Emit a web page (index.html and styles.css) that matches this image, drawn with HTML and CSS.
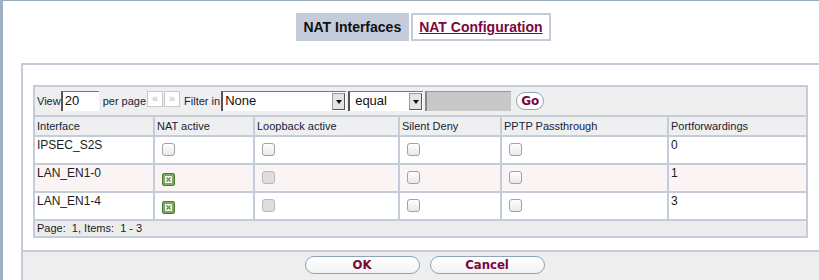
FILE: index.html
```html
<!DOCTYPE html>
<html lang="en">
<head>
    <meta charset="UTF-8">
    <title>NAT Interfaces</title>
    <link rel="stylesheet" href="styles.css">
</head>
<body>

    <div class="page">
        <!-- Tabs -->
        <div class="tabs">
            <span class="tab tab-active">NAT Interfaces</span>
            <a class="tab tab-link" href="#">NAT Configuration</a>
        </div>

        <div class="panel">
            <div class="panel-body">
                <table class="list">
                    <tr class="toolbar">
                        <td colspan="6">
                            <div class="tools">
                                <span class="lbl">View</span>
                                <span class="field field-view">20</span>
                                <span class="lbl lbl-gap">per page</span>
                                <span class="pager">&laquo;</span>
                                <span class="pager">&raquo;</span>
                                <span class="lbl lbl-gap">Filter in</span>
                                <span class="field field-select sel-none">None<span class="arrow"></span></span>
                                <span class="field field-select sel-equal">equal<span class="arrow"></span></span>
                                <span class="field field-off"></span>
                                <button class="go">Go</button>
                            </div>
                        </td>
                    </tr>
                    <tr class="head">
                        <td class="c1">Interface</td>
                        <td class="c2">NAT active</td>
                        <td class="c3">Loopback active</td>
                        <td class="c4">Silent Deny</td>
                        <td class="c5">PPTP Passthrough</td>
                        <td class="c6">Portforwardings</td>
                    </tr>
                    <tr class="row">
                        <td>IPSEC_S2S</td>
                        <td><span class="cb"></span></td>
                        <td><span class="cb"></span></td>
                        <td><span class="cb"></span></td>
                        <td><span class="cb"></span></td>
                        <td>0</td>
                    </tr>
                    <tr class="row row-alt">
                        <td>LAN_EN1-0</td>
                        <td><span class="cb cb-on"><svg width="7" height="7" viewBox="0 0 7 7"><rect x="0" y="0" width="7" height="7" fill="#f4f4f4"/><path d="M1.5 1.5 L5.5 5.5 M5.5 1.5 L1.5 5.5" stroke="#6a8a5a" stroke-width="1.3"/></svg></span></td>
                        <td><span class="cb cb-off"></span></td>
                        <td><span class="cb"></span></td>
                        <td><span class="cb"></span></td>
                        <td>1</td>
                    </tr>
                    <tr class="row">
                        <td>LAN_EN1-4</td>
                        <td><span class="cb cb-on"><svg width="7" height="7" viewBox="0 0 7 7"><rect x="0" y="0" width="7" height="7" fill="#f4f4f4"/><path d="M1.5 1.5 L5.5 5.5 M5.5 1.5 L1.5 5.5" stroke="#6a8a5a" stroke-width="1.3"/></svg></span></td>
                        <td><span class="cb cb-off"></span></td>
                        <td><span class="cb"></span></td>
                        <td><span class="cb"></span></td>
                        <td>3</td>
                    </tr>
                    <tr class="foot">
                        <td colspan="6">Page:&nbsp; 1, Items:&nbsp; 1 - 3</td>
                    </tr>
                </table>
            </div>

            <div class="actions">
                <button class="btn">OK</button>
                <button class="btn">Cancel</button>
            </div>
        </div>
    </div>

</body>
</html>
```

FILE: styles.css
```css
html, body {
    margin: 0;
    padding: 0;
    background: #ffffff;
    overflow: hidden;
}

body {
    font-family: "Liberation Sans", Arial, sans-serif;
    color: #1c1c1c;
}

/* bluish frame on the left and top */
.page {
    min-height: 280px;
    border-left: 3px solid #9fb0c4;
    border-top: 1px solid #9aaabb;
    box-sizing: border-box;
    width: 826px;
}

/* Tabs */
.tabs {
    display: flex;
    justify-content: center;
    gap: 2px;
    margin-top: 12px;
    padding-left: 18px;
}

.tab {
    height: 28px;
    box-sizing: border-box;
    font-size: 14px;
    font-weight: bold;
    line-height: 28px;
    padding: 0 8px 0 7px;
}

.tab-active {
    background: #c3ccd8;
    color: #111111;
}

.tab-link {
    border: 2px solid #c3ccd8;
    line-height: 24px;
    padding: 0 6px 0 6px;
    color: #7a0740;
    text-decoration: underline;
}

/* Panel */
.panel {
    margin: 22px 0 0 18px;
    border: 2px solid #c3ccd8;
    border-right: none;
    border-bottom: none;
}

.panel-body {
    padding: 20px 0 12px 10px;
}

.list {
    width: 775px;
    border-collapse: separate;
    border-spacing: 2px;
    background: #c3ccd8;
    font-size: 11px;
}

.list td {
    padding: 0 2px;
    vertical-align: top;
}

.toolbar td {
    background: #efefef;
    height: 28px;
    padding: 0 2px;
    vertical-align: middle;
}

.tools {
    display: flex;
    align-items: center;
    color: #15243c;
}

.lbl-gap {
    margin-left: 4px;
}

.field {
    display: inline-block;
    box-sizing: border-box;
    height: 20px;
    line-height: 18px;
    font-size: 13px;
    background: #ffffff;
    border-left: 2px solid #555555;
    border-top: 1px solid #777777;
    padding-left: 2px;
    color: #111111;
}

.field-view {
    width: 38px;
}

.field-select {
    position: relative;
    padding-right: 14px;
}

.sel-none {
    width: 125px;
    margin-left: 1px;
}

.sel-equal {
    width: 75px;
    margin-left: 2px;
    padding-left: 5px;
}

.arrow {
    position: absolute;
    right: 1px;
    top: 1px;
    width: 11px;
    height: 15px;
    background: #e4e4e4;
    border: 1px solid #9a9a9a;
    border-right-color: #555555;
    border-bottom-color: #555555;
}

.arrow::after {
    content: "";
    position: absolute;
    left: 3px;
    top: 6px;
    border-left: 3px solid transparent;
    border-right: 3px solid transparent;
    border-top: 4px solid #111111;
}

.field-off {
    width: 86px;
    margin-left: 2px;
    background: #c8c8c8;
    border-left: 2px solid #888888;
    border-top: 1px solid #999999;
}

.pager {
    display: inline-block;
    width: 16px;
    height: 16px;
    box-sizing: border-box;
    border: 1px solid #c8c8c8;
    background: #ffffff;
    color: #b8b8b8;
    font-size: 11px;
    line-height: 13px;
    text-align: center;
    margin-left: 1px;
    margin-top: -4px;
}

.go {
    margin-left: 5px;
    height: 18px;
    padding: 0 4px;
    border: 1px solid #8fa3b8;
    border-radius: 9px;
    background: #ffffff;
    color: #7a0740;
    font-family: "DejaVu Sans", sans-serif;
    font-weight: bold;
    font-size: 12px;
    line-height: 14px;
}

.head td {
    background: #efefef;
    height: 18px;
    line-height: 18px;
    color: #14233a;
}

.c1 { width: 114px; }
.c2 { width: 94px; }
.c3 { width: 139px; }
.c4 { width: 96px; }
.c5 { width: 161px; }
.c6 { width: 133px; }

.row td {
    background: #ffffff;
    height: 25px;
    font-size: 12px;
    line-height: 15px;
    padding-top: 1px;
}

.row-alt td {
    background: #faf5f4;
}

/* Checkboxes */
.cb {
    display: block;
    width: 13px;
    height: 13px;
    box-sizing: border-box;
    margin: 5px 0 0 5px;
    border: 1px solid #a2a2a2;
    border-radius: 3px;
    background: linear-gradient(#ffffff, #e8e8e8);
}

.cb-off {
    background: #dddddd;
    border-color: #b8b8b8;
}

.cb-on {
    display: flex;
    align-items: center;
    justify-content: center;
    background: #7da860;
    border-color: #4f7a3a;
    border-radius: 2px;
    margin-top: 7px;
}

.foot td {
    background: #ececec;
    height: 15px;
    line-height: 15px;
}

/* Bottom buttons */
.actions {
    display: flex;
    justify-content: center;
    gap: 10px;
    background: #eeeeee;
    border-top: 2px solid #c3ccd8;
    padding: 4px 0 10px;
}

.btn {
    width: 115px;
    height: 18px;
    border: 1px solid #8fa3b8;
    border-radius: 9px;
    background: linear-gradient(#ffffff, #f2f2f2);
    color: #7a0740;
    font-family: "DejaVu Sans Condensed", "DejaVu Sans", sans-serif;
    font-weight: bold;
    font-size: 13px;
    line-height: 14px;
    padding: 0;
}
```
